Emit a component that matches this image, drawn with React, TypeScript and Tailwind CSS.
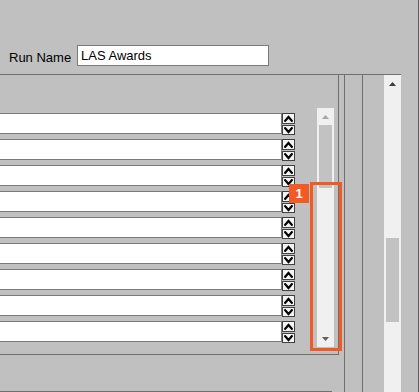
import React from "react";

const LINE = "bg-[#707070]";

function Tri({ dir, color }: { dir: "up" | "down"; color: string }) {
  return (
    <svg width="7" height="4" viewBox="0 0 7 4" className="block">
      {dir === "up" ? (
        <polygon points="0,4 7,4 3.5,0" fill={color} />
      ) : (
        <polygon points="0,0 7,0 3.5,4" fill={color} />
      )}
    </svg>
  );
}

function Chevron({ dir }: { dir: "up" | "down" }) {
  return (
    <svg width="9" height="7" viewBox="0 0 9 7" className="block">
      <path
        d={dir === "up" ? "M1.2 5.8 L4.5 2 L7.8 5.8" : "M1.2 1.2 L4.5 5 L7.8 1.2"}
        stroke="#000"
        strokeWidth="2.2"
        fill="none"
        strokeLinecap="square"
      />
    </svg>
  );
}

function Spinner() {
  return (
    <div className="flex flex-col gap-[1px] w-[13px]">
      <div className="h-[11px] bg-[#f4f4f4] border border-[#404040] flex items-center justify-center">
        <Chevron dir="up" />
      </div>
      <div className="h-[10px] bg-[#f4f4f4] border border-[#404040] flex items-center justify-center">
        <Chevron dir="down" />
      </div>
    </div>
  );
}

function Row() {
  return (
    <div className="flex h-[21px] items-start">
      <div className="w-[282px] h-[21px] bg-white border-t border-b border-r border-[#7a7a7a]" />
      <Spinner />
    </div>
  );
}

export default function App() {
  const rows = Array.from({ length: 9 }, (_, i) => i);

  return (
    <div
      className="relative w-[419px] h-[392px] overflow-hidden bg-[#c0c0c0] border-r border-[#5c5c5c] flex flex-col text-[13px] text-black"
      style={{ fontFamily: '"Liberation Sans", Arial, sans-serif' }}
    >
      {/* header */}
      <div className="h-[74px] flex items-start pt-[45px] pl-[9px] shrink-0">
        <div className="w-[68px] mt-[2px] leading-[21px] whitespace-nowrap">Run Name</div>
        <div className="w-[192px] h-[21px] bg-white border border-[#7a7a7a] pl-[3px] leading-[19px] whitespace-nowrap">
          LAS Awards
        </div>
      </div>

      {/* body */}
      <div className="flex flex-1 min-h-0">
        <div className="w-[401px] border-t border-[#707070] flex">
          {/* left column */}
          <div className="w-[339px] flex flex-col">
            <div className="h-[280px] border-r border-b border-[#707070] flex items-start">
              <div className="w-[317px] pt-[38px] flex flex-col gap-[5px]">
                {rows.map((i) => (
                  <Row key={i} />
                ))}
              </div>
              {/* inner scrollbar */}
              <div className="mt-[33px] w-[17px] h-[239px] bg-[#f0f0f0] flex flex-col">
                <div className="h-[17px] flex items-center justify-center pt-[1px]">
                  <Tri dir="up" color="#a6a6a6" />
                </div>
                <div className="mx-[2px] h-[63px] bg-[#c2c2c2]" />
                <div className="flex-1" />
                <div className="h-[17px] flex items-center justify-center pt-[1px]">
                  <Tri dir="down" color="#5e5e5e" />
                </div>
              </div>
            </div>
            <div className="flex-1 flex flex-col justify-end">
              <div className={`w-[332px] h-px ${LINE}`} />
            </div>
          </div>

          <div className="w-[5px]" />
          <div className={`w-px ${LINE}`} />
          <div className="w-[17px]" />
          <div className={`w-px ${LINE}`} />
          <div className="w-[21px]" />

          {/* outer scrollbar */}
          <div className="w-[17px] bg-[#f0f0f0] flex flex-col">
            <div className="h-[17px] flex items-center justify-center pt-[1px]">
              <Tri dir="up" color="#3c3c3c" />
            </div>
            <div className="mt-[146px] mx-[2px] h-[84px] bg-[#c2c2c2]" />
          </div>
        </div>
      </div>

      {/* annotation overlay */}
      <div className="absolute left-[310px] top-[182px] w-[32px] h-[169px] border-[3px] border-[#f15a24]" />
      <div className="absolute left-[289px] top-[184px] w-[20px] h-[19px] bg-[#f15a24] text-white font-bold text-[13px] leading-[19px] text-center">
        1
      </div>
    </div>
  );
}
